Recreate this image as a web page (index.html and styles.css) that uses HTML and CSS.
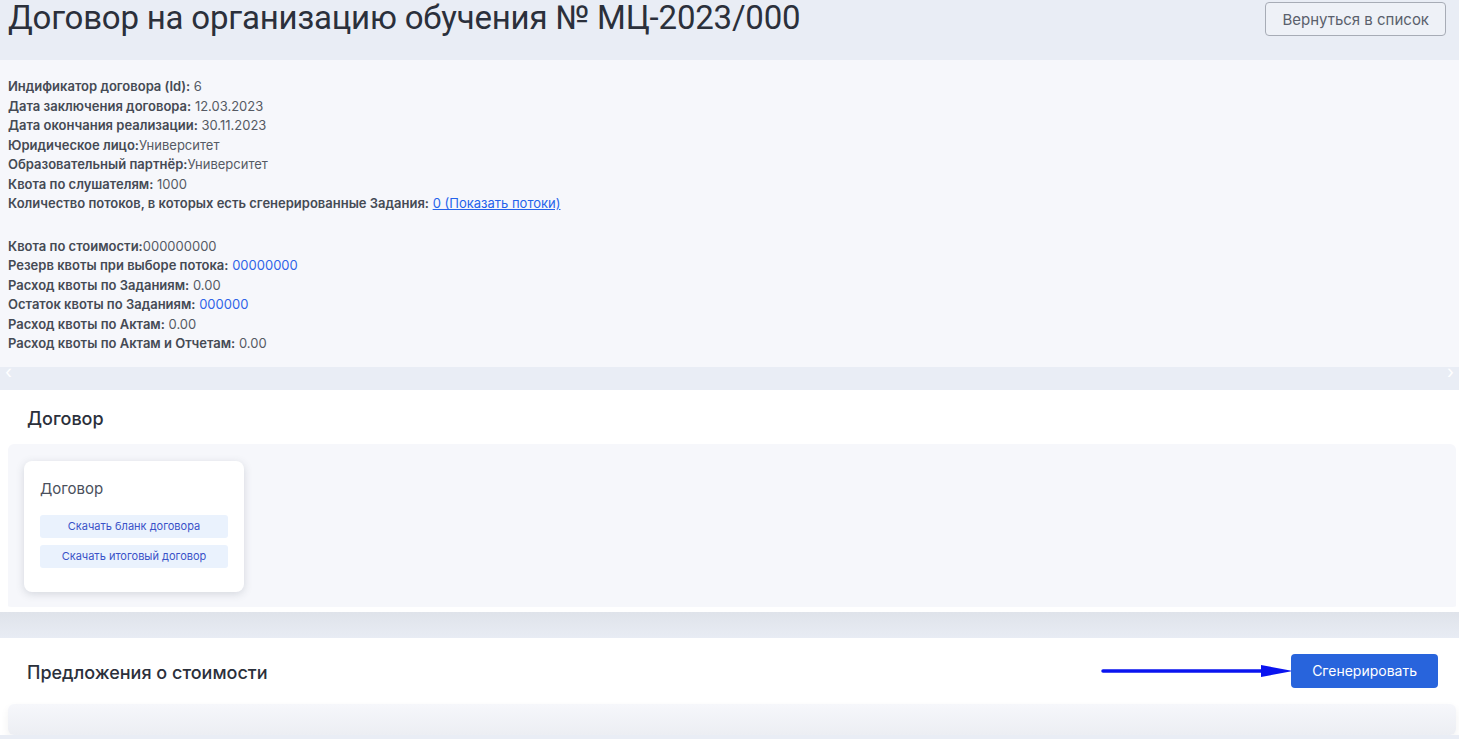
FILE: index.html
```html
<!DOCTYPE html>
<html lang="ru">
<head>
    <meta charset="UTF-8">
    <title>Договор</title>
    <link rel="stylesheet" href="styles.css">
</head>
<body>
    <!-- Header -->
    <div class="page-head">
        <h1>Договор на организацию обучения № МЦ-2023/000</h1>
        <button class="btn-back">Вернуться в список</button>
    </div>

    <!-- Contract info -->
    <div class="info">
        <div><b>Индификатор договора (Id):</b> 6</div>
        <div><b>Дата заключения договора:</b> 12.03.2023</div>
        <div><b>Дата окончания реализации:</b> 30.11.2023</div>
        <div><b>Юридическое лицо:</b>Университет</div>
        <div><b>Образовательный партнёр:</b>Университет</div>
        <div><b>Квота по слушателям:</b> 1000</div>
        <div><b>Количество потоков, в которых есть сгенерированные Задания:</b> <a href="#">0 (Показать потоки)</a></div>
        <div class="spacer"></div>
        <div><b>Квота по стоимости:</b>000000000</div>
        <div><b>Резерв квоты при выборе потока:</b> <span class="blue">00000000</span></div>
        <div><b>Расход квоты по Заданиям:</b> 0.00</div>
        <div><b>Остаток квоты по Заданиям:</b> <span class="blue">000000</span></div>
        <div><b>Расход квоты по Актам:</b> 0.00</div>
        <div><b>Расход квоты по Актам и Отчетам:</b> 0.00</div>
    </div>

    <div class="band">
        <span class="chev">&#8249;</span>
        <span class="chev">&#8250;</span>
    </div>

    <!-- Contract section -->
    <div class="section">
        <div class="section-head">
            <h2>Договор</h2>
        </div>
        <div class="panel">
            <div class="card">
                <div class="card-title">Договор</div>
                <button class="btn-light">Скачать бланк договора</button>
                <button class="btn-light">Скачать итоговый договор</button>
            </div>
        </div>
    </div>

    <div class="band band-dark"></div>

    <!-- Price offers -->
    <div class="section">
        <div class="section-head offers-head">
            <h2>Предложения о стоимости</h2>
            <div class="actions">
                <svg class="arrow" width="192" height="16" viewBox="0 0 192 16">
                    <line x1="2" y1="8" x2="165" y2="8" stroke="#0a14f0" stroke-width="3.5" stroke-linecap="round"/>
                    <polygon points="160,2 192,8 160,14" fill="#0a14f0"/>
                </svg>
                <button class="btn-primary">Сгенерировать</button>
            </div>
        </div>
        <div class="panel panel-bottom"></div>
    </div>
</body>
</html>
```

FILE: styles.css
```css
body {
    margin: 0;
    background-color: #e9edf5;
    font-family: Inter, "Noto Sans", sans-serif;
    color: #3c414c;
}

.page-head {
    height: 60px;
    display: flex;
    justify-content: space-between;
    align-items: flex-start;
    padding: 0 13px 0 8px;
}

.page-head h1 {
    margin: 0;
    font-family: Roboto, sans-serif;
    font-weight: 400;
    font-size: 33px;
    line-height: 36px;
    color: #2b303b;
    letter-spacing: -0.2px;
}

.btn-back {
    margin-top: 2px;
    height: 34px;
    padding: 0 16px;
    background: #eef1f7;
    border: 1px solid #a7acb6;
    border-radius: 4px;
    font-family: Inter, sans-serif;
    font-size: 15px;
    color: #5a606c;
}

.info {
    background-color: #f6f7fb;
    padding: 17px 8px 13px;
    font-size: 13px;
    line-height: 19.5px;
    color: #555a64;
}

.info b {
    font-weight: 600;
    color: #454a54;
}

.info a {
    color: #2563eb;
}

.info .blue {
    color: #2f64e8;
}

.spacer {
    height: 23px;
}

.band {
    height: 23px;
    display: flex;
    justify-content: space-between;
    padding: 0 5px;
}

.chev {
    color: #ffffff;
    font-size: 18px;
    line-height: 10px;
}

.band-dark {
    height: 26px;
    background: linear-gradient(#dfe3ea, #e8ecf4);
}

.section {
    background-color: #fff;
}

.section-head {
    display: flex;
    justify-content: space-between;
    align-items: center;
    height: 54px;
    padding: 0 21px 0 27px;
}

.section-head h2 {
    margin: 4px 0 0;
    font-family: Inter, sans-serif;
    font-weight: 500;
    font-size: 18px;
    color: #2b303b;
}

.panel {
    background-color: #f6f7fb;
    margin: 0 3px 0 8px;
    padding: 17px 16px 16px;
    border-radius: 6px;
    height: 130px;
    border-bottom: 5px solid #fff;
}

.card {
    width: 188px;
    height: 113px;
    padding: 18px 16px 0;
    background: #fff;
    border-radius: 8px;
    box-shadow: 0 2px 8px rgba(60, 70, 90, 0.18);
}

.card-title {
    font-size: 15px;
    color: #4a505c;
    margin-bottom: 17px;
}

.btn-light {
    display: block;
    width: 188px;
    height: 23px;
    margin-bottom: 7px;
    border: none;
    border-radius: 3px;
    background: #eaf2fd;
    color: #3a52c8;
    font-family: Inter, sans-serif;
    font-size: 11px;
}

.offers-head {
    height: 66px;
}

.actions {
    display: flex;
    align-items: center;
}

.arrow {
    display: block;
    margin-right: -2px;
}

.btn-primary {
    height: 34px;
    padding: 0 21px;
    border: none;
    border-radius: 4px;
    background: #2864dc;
    color: #fff;
    font-family: Inter, sans-serif;
    font-size: 14px;
}

.panel-bottom {
    height: 31px;
    padding: 0;
    border-bottom: none;
    background: linear-gradient(#f6f7fb, #eceef3);
    box-shadow: 0 4px 8px rgba(0, 0, 0, 0.06);
}
```
